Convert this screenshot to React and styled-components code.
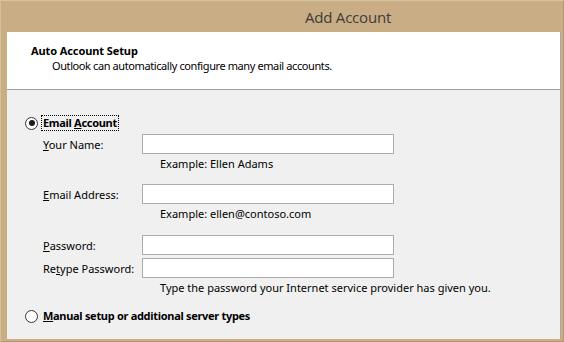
import React from 'react'
import styled, { createGlobalStyle } from 'styled-components'

const GlobalStyle = createGlobalStyle`
  html, body {
    margin: 0;
    padding: 0;
    background: #c9ad84;
  }
  body {
    font-family: "Noto Sans", "Open Sans", sans-serif;
    font-size: 11px;
    color: #000;
  }
`

function Radio({ checked, label, accel, rest, focused }) {
  return (
    <RadioRow>
      <RadioDot checked={checked} />
      <RadioLabel focused={focused}>
        {label}<u>{accel}</u>{rest}
      </RadioLabel>
    </RadioRow>
  )
}

function Field({ pre, accel, rest, gap }) {
  return (
    <FieldRow gap={gap}>
      <FieldLabel>{pre}<u>{accel}</u>{rest}</FieldLabel>
      <TextBox />
    </FieldRow>
  )
}

export default function App() {
  return (
    <Window>
      <GlobalStyle />
      <TitleBar>Add Account</TitleBar>
      <Client>
        <Header>
          <HeaderTitle>Auto Account Setup</HeaderTitle>
          <HeaderText>Outlook can automatically configure many email accounts.</HeaderText>
        </Header>
        <Body>
          <Radio checked focused label="Email " accel="A" rest="ccount" />
          <Fields>
            <Field gap={3} pre="" accel="Y" rest="our Name:" />
            <Hint>Example: Ellen Adams</Hint>
            <Field gap={13} pre="" accel="E" rest="mail Address:" />
            <Hint>Example: ellen@contoso.com</Hint>
            <Field gap={14} pre="" accel="P" rest="assword:" />
            <Field gap={3} pre="Re" accel="t" rest="ype Password:" />
            <Hint>Type the password your Internet service provider has given you.</Hint>
          </Fields>
          <SecondRadio>
            <Radio label="" accel="M" rest="anual setup or additional server types" />
          </SecondRadio>
        </Body>
      </Client>
    </Window>
  )
}

const Window = styled.div`
  width: 564px;
  height: 342px;
  box-sizing: border-box;
  display: flex;
  flex-direction: column;
  background: #c9ad84;
  border-top: 1px solid #d9c29e;
  border-left: 1px solid #d6bf9b;
  border-right: 1px solid #b39670;
  border-bottom: 1px solid #b39670;
  padding: 0 2px 2px 6px;
`

const TitleBar = styled.div`
  height: 31px;
  flex-shrink: 0;
  display: flex;
  align-items: center;
  justify-content: center;
  padding-left: 128px;
  font-family: "Open Sans", "Noto Sans", sans-serif;
  font-size: 15px;
  letter-spacing: -0.2px;
  color: #3c3c3c;
`

const Client = styled.div`
  flex: 1;
  display: flex;
  flex-direction: column;
  background: #f0f0f0;
  border-right: 1px solid #a8a8a8;
`

const Header = styled.div`
  height: 58px;
  box-sizing: border-box;
  background: #fff;
  border-bottom: 1px solid #a0a0a0;
  padding: 11px 0 0 24px;
`

const HeaderTitle = styled.div`
  font-weight: bold;
  line-height: 15px;
  letter-spacing: -0.1px;
`

const HeaderText = styled.div`
  line-height: 15px;
  padding-left: 21px;
  letter-spacing: -0.4px;
`

const Body = styled.div`
  padding: 25px 0 0 18px;
`

const RadioRow = styled.div`
  display: flex;
  align-items: center;
  height: 16px;
`

const RadioDot = styled.span`
  width: 11px;
  height: 11px;
  border-radius: 50%;
  border: 1px solid #333;
  background: #fff;
  display: flex;
  align-items: center;
  justify-content: center;
  margin-right: 4px;
  &::after {
    content: '';
    width: 6px;
    height: 6px;
    border-radius: 50%;
    background: ${p => (p.checked ? '#1a1a1a' : 'transparent')};
  }
`

const RadioLabel = styled.span`
  font-weight: bold;
  line-height: 14px;
  padding: 0 1px;
  letter-spacing: -0.3px;
  outline: ${p => (p.focused ? '1px dotted #000' : 'none')};
`

const Fields = styled.div`
  display: flex;
  flex-direction: column;
  padding-left: 18px;
`

const FieldRow = styled.div`
  display: flex;
  align-items: center;
  margin-top: ${p => p.gap}px;
`

const FieldLabel = styled.span`
  width: 99px;
`

const TextBox = styled.div`
  width: 250px;
  height: 18px;
  background: #fff;
  border: 1px solid #ababab;
`

const Hint = styled.div`
  padding-left: 117px;
  line-height: 14px;
  margin-top: 3px;
`

const SecondRadio = styled.div`
  margin-top: 13px;
`
